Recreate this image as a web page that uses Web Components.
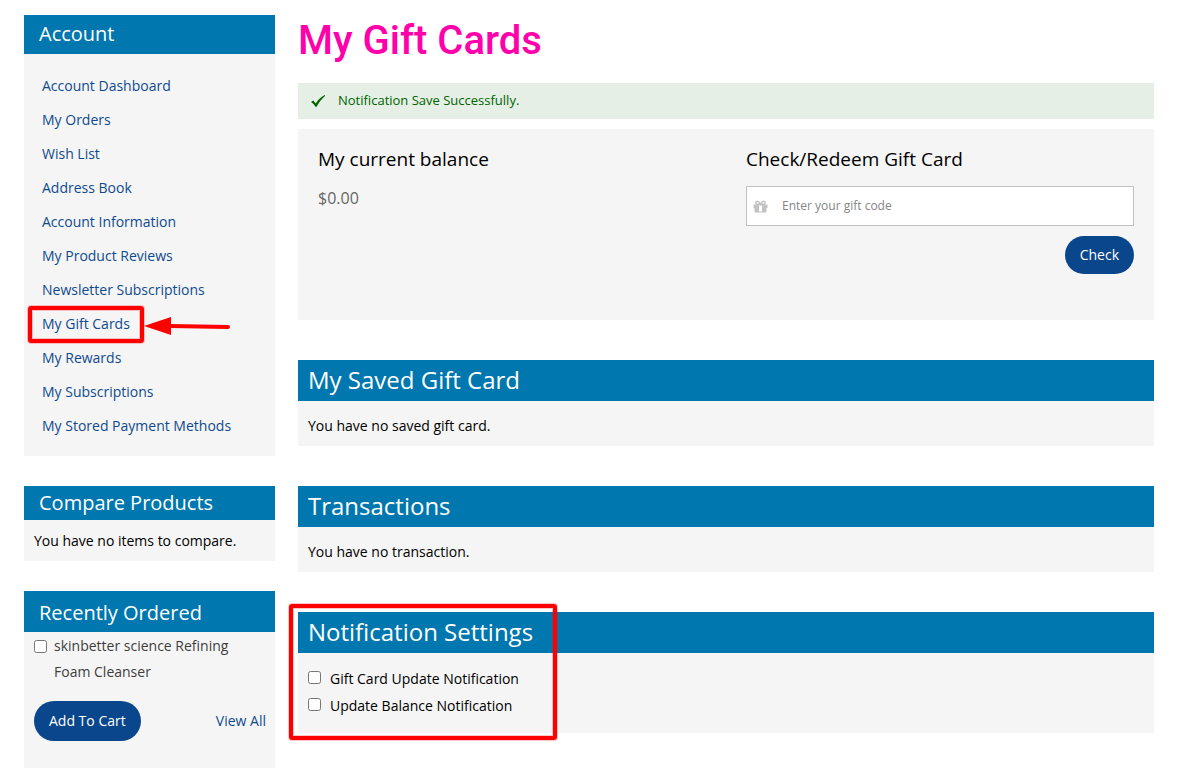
<!DOCTYPE html>
<html lang="en">
<head>
<meta charset="utf-8">
<title>My Gift Cards</title>
<style>
  body {
    margin: 0;
    background: #fff;
    color: #000;
    font: 14px/20px "Open Sans", sans-serif;
    --brand: #0077ae;
    --button: #0a468c;
    --link: #0f4a8f;
    --panel: #f5f5f5;
    --mark: #ff0000;
  }
</style>
</head>
<body>
<account-page></account-page>

<script>
const define = (name, html) => {
  const template = document.createElement('template');
  template.innerHTML = '<style>*{box-sizing:border-box}[hidden]{display:none}</style>' + html;
  customElements.define(name, class extends HTMLElement {
    constructor() {
      super();
      this.attachShadow({ mode: 'open' }).append(template.content.cloneNode(true));
    }
  });
};

/* Red frame laid over the element it highlights */
define('mark-frame', `
  <style>
    :host {
      position: absolute; pointer-events: none; box-sizing: border-box;
      border: 4px solid var(--mark); border-radius: 3px;
      box-shadow: 0 0 0 1px rgba(255,0,0,.22), inset 0 0 0 1px rgba(255,0,0,.22);
    }
  </style>`);

define('mark-arrow', `
  <style>:host { position: absolute; pointer-events: none; } svg { display: block; }</style>
  <svg width="88" height="20" viewBox="0 0 88 20" aria-hidden="true">
    <path d="M26 10 L84 11" stroke="#ff0000" stroke-width="4" stroke-linecap="round"/>
    <path d="M0 10 L27 1 V19 Z" fill="#ff0000"/>
  </svg>`);

define('pill-button', `
  <style>
    :host { display: block; }
    button {
      display: block; border: 0; border-radius: 20px; background: var(--button); color: #fff;
      font: inherit; font-weight: 500; line-height: 20px; cursor: pointer;
      padding: var(--pill-pad, 9px) 15px;
    }
  </style>
  <button type="button"><slot></slot></button>`);

define('side-block', `
  <style>
    :host { display: block; background: var(--panel); }
    h2 {
      margin: 0; padding: var(--head-pad, 5px 15px 7px); background: var(--brand); color: #fff;
      font-size: 20px; line-height: 27px; font-weight: 400;
    }
  </style>
  <h2><slot name="title"></slot></h2>
  <slot></slot>`);

define('nav-item', `
  <style>
    :host { display: block; position: relative; line-height: 34px; padding-left: 18px; color: var(--link); }
    ::slotted(a) { color: inherit; text-decoration: none; }
  </style>
  <slot></slot>`);

define('account-nav', `
  <style>
    :host { display: block; }
    nav { padding: 15px 0 13px; }
    a { color: inherit; text-decoration: none; }
    mark-frame { left: 4px; top: -1px; width: 116px; height: 37px; }
    mark-arrow { left: 120px; top: 9px; }
  </style>
  <side-block>
    <span slot="title">Account</span>
    <nav>
      <nav-item><a href="#dashboard">Account Dashboard</a></nav-item>
      <nav-item><a href="#orders">My Orders</a></nav-item>
      <nav-item><a href="#wishlist">Wish List</a></nav-item>
      <nav-item><a href="#addresses">Address Book</a></nav-item>
      <nav-item><a href="#information">Account Information</a></nav-item>
      <nav-item><a href="#reviews">My Product Reviews</a></nav-item>
      <nav-item><a href="#newsletter">Newsletter Subscriptions</a></nav-item>
      <nav-item><a href="#giftcards">My Gift Cards</a><mark-frame></mark-frame><mark-arrow></mark-arrow></nav-item>
      <nav-item><a href="#rewards">My Rewards</a></nav-item>
      <nav-item><a href="#subscriptions">My Subscriptions</a></nav-item>
      <nav-item><a href="#payments">My Stored Payment Methods</a></nav-item>
    </nav>
  </side-block>`);

define('compare-products', `
  <style>
    :host { display: block; }
    side-block { --head-pad: 3px 15px 4px; }
    p { margin: 0; padding: 11px 10px 10px; }
  </style>
  <side-block>
    <span slot="title">Compare Products</span>
    <p>You have no items to compare.</p>
  </side-block>`);

define('recently-ordered', `
  <style>
    :host { display: block; }
    side-block { --head-pad: 8px 15px 6px; }
    form { padding: 1px 9px 27px 10px; }
    .item { display: flex; gap: 7px; align-items: flex-start; }
    input { flex: none; width: 13px; height: 13px; margin: 7px 0 0; }
    label { color: #3d3d3d; line-height: 26px; padding-right: 30px; }
    .actions { display: flex; justify-content: space-between; align-items: center; margin-top: 16px; }
    pill-button { --pill-pad: 10px; }
    a { color: var(--link); text-decoration: none; }
  </style>
  <side-block>
    <span slot="title">Recently Ordered</span>
    <form>
      <div class="item">
        <input type="checkbox" id="item">
        <label for="item">skinbetter science Refining Foam Cleanser</label>
      </div>
      <div class="actions">
        <pill-button>Add To Cart</pill-button>
        <a href="#all">View All</a>
      </div>
    </form>
  </side-block>`);

define('success-message', `
  <style>
    :host {
      display: flex; align-items: center; gap: 12px; padding: 7px 12px 9px;
      background: #e5efe5; color: #006400; font-size: 13px;
    }
    svg { flex: none; }
  </style>
  <svg width="16" height="16" viewBox="0 0 16 16" aria-hidden="true">
    <path d="M1 10 L3.2 8.600 L5.800 11.400 C8.200 7.800 11 5 14.600 3 L15.200 3.700 C11.800 6.800 8.800 10.500 6.600 14.800 L5.400 14.800 C4.300 12.800 2.800 11.200 1 10Z" fill="#006400"/>
  </svg>
  <span><slot></slot></span>`);

define('gift-balance', `
  <style>
    :host {
      display: grid; grid-template-columns: 1fr 1fr; gap: 40px;
      padding: 18px 20px 46px; background: var(--panel);
    }
    h2 { margin: 0; font-size: 19px; line-height: 24px; font-weight: 400; }
    .amount { margin: 15px 0 0; font-size: 16px; line-height: 24px; color: #666; }
    .field {
      display: flex; align-items: center; gap: 14px; height: 40px; margin: 15px 0 10px; padding-left: 6px;
      background: #fff; border: 1px solid #c2c2c2;
    }
    svg { flex: none; }
    input {
      flex: 1; min-width: 0; border: 0; outline: 0; padding: 0; background: none; color: #333;
      font: 400 12px/20px "Open Sans", sans-serif;
    }
    input::placeholder { color: #858585; opacity: 1; }
    .row { display: flex; justify-content: flex-end; }
  </style>
  <section>
    <h2>My current balance</h2>
    <p class="amount">$0.00</p>
  </section>
  <section>
    <h2>Check/Redeem Gift Card</h2>
    <div class="field">
      <svg width="15" height="16" viewBox="0 0 15 16" aria-hidden="true">
        <path d="M1.500 8h4.500v6.500H2.700a1.200 1.200 0 0 1-1.200-1.200zM9 8h4.500v5.300a1.200 1.200 0 0 1-1.200 1.200H9zM.5 6.500h5.500V10H.5zM9 6.500h5.500V10H9zM6 6h3v1.500H6zM6 13.500h3v1H6z" fill="#c2c2c2"/>
        <path d="M7.500 6.300H4.600C2.300 6.300 2.300 3.200 4.300 3.200c1.600 0 2.200 1.400 3.200 3.100zM7.500 6.300h2.900c2.300 0 2.300-3.100.3-3.100-1.600 0-2.200 1.400-3.200 3.100z" fill="none" stroke="#c2c2c2" stroke-width="1.500"/>
      </svg>
      <input type="text" placeholder="Enter your gift code" aria-label="Gift code">
    </div>
    <div class="row"><pill-button>Check</pill-button></div>
  </section>`);

define('content-block', `
  <style>
    :host { display: block; position: relative; background: var(--panel); }
    h2 {
      margin: 0; padding: 3px 10px 5px; background: var(--brand); color: #fff;
      font-size: 24px; line-height: 33px; font-weight: 400;
    }
    .body { padding: 15px 10px 10px; }
  </style>
  <h2><slot name="title"></slot></h2>
  <div class="body"><slot></slot></div>`);

define('notification-settings', `
  <style>
    :host { display: block; position: relative; }
    mark-frame { left: -9px; top: -8px; width: 268px; height: 136px; }
    form { display: grid; gap: 7px; padding: 1px 0 7px; }
    div { display: flex; gap: 9px; align-items: flex-start; }
    input { width: 13px; height: 13px; margin: 2px 0 0; }
  </style>
  <content-block>
    <span slot="title">Notification Settings</span>
    <form>
      <div><input type="checkbox" id="update"><label for="update">Gift Card Update Notification</label></div>
      <div><input type="checkbox" id="balance"><label for="balance">Update Balance Notification</label></div>
    </form>
  </content-block>
  <mark-frame></mark-frame>`);

define('account-page', `
  <style>
    :host {
      display: grid; grid-template-columns: 251px minmax(0, 1fr); column-gap: 23px; align-items: start;
      padding: 15px 28px 14px 24px;
    }
    aside { display: grid; gap: 30px; }
    h1 { margin: 0 0 16px; color: #ff00aa; font: 500 40px/52px Roboto, sans-serif; }
    gift-balance { margin-top: 10px; }
    .blocks { display: grid; gap: 40px; margin-top: 40px; }
  </style>
  <aside>
    <account-nav></account-nav>
    <compare-products></compare-products>
    <recently-ordered></recently-ordered>
  </aside>
  <main>
    <h1>My Gift Cards</h1>
    <success-message>Notification Save Successfully.</success-message>
    <gift-balance></gift-balance>
    <div class="blocks">
      <content-block><span slot="title">My Saved Gift Card</span>You have no saved gift card.</content-block>
      <content-block><span slot="title">Transactions</span>You have no transaction.</content-block>
      <notification-settings></notification-settings>
    </div>
  </main>`);
</script>
</body>
</html>
